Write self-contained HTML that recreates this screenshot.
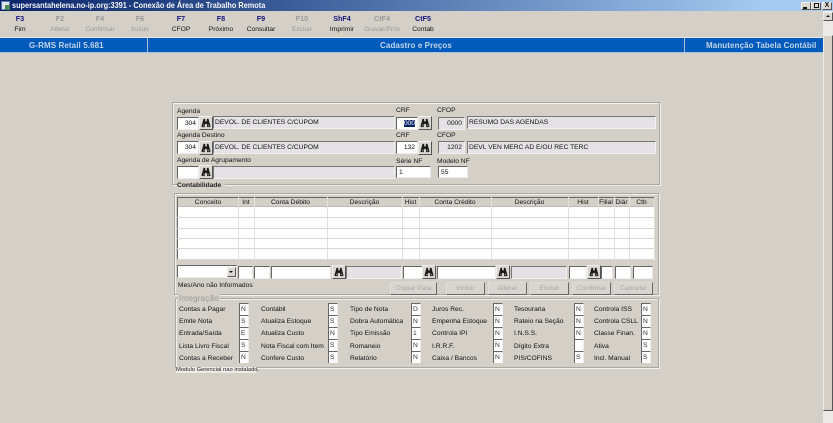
<!DOCTYPE html>
<html><head><meta charset="utf-8"><style>
html,body{margin:0;padding:0;background:#d4d0c8}
#r{position:relative;width:833px;height:423px;overflow:hidden;background:#d4d0c8;font:6.7px "Liberation Sans",sans-serif;color:#111;filter:blur(.35px)}
#r div,#r svg{position:absolute;box-sizing:border-box;white-space:nowrap}
.c{text-align:center}
.b{font-weight:bold;color:#14147a;font-size:7.2px}
.d{color:#999}
.k{color:#111}
.h{background:#005abc;height:16px;top:37px;color:#c4d4e8;font-weight:bold;font-size:8px;letter-spacing:.1px;line-height:15px;border-bottom:1px solid #a8c4e4;border-top:1px solid #e8e8e8}
.i{background:#fff;border-top:1px solid #666;border-left:1px solid #666;border-right:1px solid #e8e8e8;border-bottom:1px solid #eee;line-height:11px;padding:0 2px;height:13px}
.g{background:#e4e2e4;border-top:1px solid #777;border-left:1px solid #777;border-right:1px solid #f0f0f0;border-bottom:1px solid #f0f0f0;line-height:12px;padding:0 1px;height:13px}
.p{background:#dcd9d2;border:1px solid #eee;border-right-color:#555;border-bottom-color:#555;width:14px;height:14px}
.u{border:1px solid #ddd;border-right-color:#666;border-bottom-color:#666;color:#aaa;text-align:center;line-height:11px;height:13px;top:282px;background:#d8d5ce}
.f{background:#fff;border-top:1px solid #666;border-left:1px solid #666;border-right:1px solid #eee;width:10px;height:12px;line-height:12px;padding-left:1px;color:#333}
.l{color:#111;margin-top:1px}
.v{background:#e2e0dc;width:1px;top:197px;height:62px}
.w{background:#d8d6d2;height:1px;left:177px;width:477px}
.n{top:198px;line-height:9px;text-align:center;color:#111}
.gp{border:1px solid #a8a8a4;box-shadow:1px 1px 0 #f2f0ec, inset 1px 1px 0 #f2f0ec}
</style></head><body><div id="r">
<svg width="0" height="0" style="left:0;top:0"><defs><symbol id="z" viewBox="0 0 12 12"><path d="M3 1h2v3h2V1h2l1 4 1.500 5-1 1H7.300l-.3-4H5l-.3 4H1.500l-1-1L2 5z" fill="#1a1a1a"/><path d="M2.500 8h2v2h-2zM8 8h2v2H8z" fill="#777"/></symbol></defs></svg>

<!-- title bar -->
<div style="left:0;top:0;width:833px;height:11px;background:linear-gradient(90deg,#0a246a 0%,#2a4a88 25%,#6a8cc0 60%,#a6caf0 92%,#a6caf0 100%)"></div>
<div style="left:1px;top:1px;width:9px;height:9px;background:#dfe6f0;border:1px solid #5a7ab0"></div>
<div style="left:5px;top:5px;width:5px;height:5px;background:#4a8a5a"></div>
<div style="left:12px;top:0;height:11px;line-height:11px;color:#f4f6fa;font-size:8.2px;font-weight:bold;transform-origin:0 50%;transform:scaleX(.895)">supersantahelena.no-ip.org:3391 - Conexão de Área de Trabalho Remota</div>
<div class="p" style="left:801px;top:2px;width:10px;height:8px"></div><div style="left:803px;top:7px;width:4px;height:2px;background:#111"></div>
<div class="p" style="left:811px;top:2px;width:10px;height:8px"></div><div style="left:814px;top:3px;width:5px;height:5px;border:1px solid #111"></div>
<div class="p" style="left:822px;top:2px;width:10px;height:8px;font:bold 7px/6px 'Liberation Sans';color:#111;text-align:center">X</div>

<!-- toolbar -->
<div class="c b" style="left:0;width:40px;top:14px">F3</div><div class="c k" style="left:0;width:40px;top:26px">Fim</div>
<div class="c b d" style="left:40px;width:40px;top:14px;color:#999">F2</div><div class="c d" style="left:40px;width:40px;top:26px">Alterar</div>
<div class="c b" style="left:80px;width:40px;top:14px;color:#999">F4</div><div class="c d" style="left:80px;width:40px;top:26px">Confirmar</div>
<div class="c b" style="left:120px;width:40px;top:14px;color:#999">F6</div><div class="c d" style="left:120px;width:40px;top:26px">Incluir</div>
<div class="c b" style="left:161px;width:40px;top:14px">F7</div><div class="c k" style="left:161px;width:40px;top:26px">CFOP</div>
<div class="c b" style="left:201px;width:40px;top:14px">F8</div><div class="c k" style="left:201px;width:40px;top:26px">Próximo</div>
<div class="c b" style="left:241px;width:40px;top:14px">F9</div><div class="c k" style="left:241px;width:40px;top:26px">Consultar</div>
<div class="c b" style="left:282px;width:40px;top:14px;color:#999">F10</div><div class="c d" style="left:282px;width:40px;top:26px">Excluir</div>
<div class="c b" style="left:322px;width:40px;top:14px">ShF4</div><div class="c k" style="left:322px;width:40px;top:26px">Imprimir</div>
<div class="c b" style="left:362px;width:40px;top:14px;color:#999">CtF4</div><div class="c d" style="left:362px;width:40px;top:26px">Gravar/Próx</div>
<div class="c b" style="left:403px;width:40px;top:14px">CtF5</div><div class="c k" style="left:403px;width:40px;top:26px">Contab</div>

<!-- header bar -->
<div class="h" style="left:0;width:147px;padding-left:29px">G-RMS Retail 5.681</div>
<div class="h" style="left:147px;width:537px;text-align:center;border-left:1px solid #a8c4e4">Cadastro e Preços</div>
<div class="h" style="left:684px;width:139px;padding-left:21px;border-left:1px solid #a8c4e4">Manutenção Tabela Contábil</div>

<!-- scrollbar -->
<div style="left:823px;top:11px;width:10px;height:412px;background:#eceae6"></div>
<div class="p" style="left:823px;top:12px;width:10px;height:9px"></div>
<div style="left:826px;top:15px;width:0;height:0;border:2.500px solid transparent;border-bottom-color:#111;border-top:0"></div>
<div style="left:823px;top:35px;width:10px;height:376px;background:#d4d0c8;border:1px solid #eee;border-right-color:#555;border-bottom-color:#555"></div>

<!-- top group -->
<div class="gp" style="left:172px;top:102px;width:488px;height:83px"></div>
<div style="left:177px;top:108px">Agenda</div>
<div class="i" style="left:177px;top:117px;width:22px;text-align:right">304</div>
<div class="p" style="left:199px;top:116px"></div><svg width="10" height="10" style="left:201px;top:118px"><use href="#z"/></svg>
<div class="g" style="left:213px;top:116px;width:182px">DEVOL. DE CLIENTES C/CUPOM</div>
<div style="left:396px;top:107px">CRF</div>
<div class="i" style="left:396px;top:117px;width:22px;text-align:right"><span style="background:#0a246a;color:#fff">000</span></div>
<div class="p" style="left:418px;top:116px"></div><svg width="10" height="10" style="left:420px;top:118px"><use href="#z"/></svg>
<div style="left:437px;top:107px">CFOP</div>
<div class="g" style="left:438px;top:117px;width:27px;text-align:right;padding-right:2px">0000</div>
<div class="g" style="left:467px;top:116px;width:189px">RESUMO DAS AGENDAS</div>

<div style="left:177px;top:132px">Agenda Destino</div>
<div class="i" style="left:177px;top:141px;width:22px;text-align:right">304</div>
<div class="p" style="left:199px;top:141px"></div><svg width="10" height="10" style="left:201px;top:143px"><use href="#z"/></svg>
<div class="g" style="left:213px;top:141px;width:182px">DEVOL. DE CLIENTES C/CUPOM</div>
<div style="left:396px;top:132px">CRF</div>
<div class="i" style="left:396px;top:141px;width:22px;text-align:right">132</div>
<div class="p" style="left:418px;top:141px"></div><svg width="10" height="10" style="left:420px;top:143px"><use href="#z"/></svg>
<div style="left:437px;top:132px">CFOP</div>
<div class="g" style="left:438px;top:141px;width:27px;text-align:right;padding-right:2px">1202</div>
<div class="g" style="left:467px;top:141px;width:189px">DEVL VEN MERC AD E/OU REC TERC</div>

<div style="left:177px;top:157px">Agenda de Agrupamento</div>
<div class="i" style="left:177px;top:166px;width:22px"></div>
<div class="p" style="left:199px;top:165px"></div><svg width="10" height="10" style="left:201px;top:167px"><use href="#z"/></svg>
<div class="g" style="left:213px;top:166px;width:182px"></div>
<div style="left:396px;top:158px">Série NF</div>
<div class="i" style="left:396px;top:166px;width:35px;height:12px">1</div>
<div style="left:437px;top:158px">Modelo NF</div>
<div class="i" style="left:438px;top:166px;width:30px;height:12px">55</div>

<!-- Contabilidade -->
<div style="left:177px;top:182px;font-weight:bold;background:#d4d0c8;z-index:2;padding-right:4px;color:#222">Contabilidade</div>
<div class="gp" style="left:174px;top:193px;width:485px;height:102px"></div>

<!-- grid -->
<div style="left:177px;top:197px;width:478px;height:63px;background:#fff;border-top:1px solid #666;border-left:1px solid #666"></div>
<div style="left:178px;top:198px;width:476px;height:9px;background:#d4d0c8;border-bottom:1px solid #bbb"></div>
<div class="v" style="left:238px"></div><div class="v" style="left:254px"></div><div class="v" style="left:327px"></div><div class="v" style="left:402px"></div><div class="v" style="left:419px"></div><div class="v" style="left:491px"></div><div class="v" style="left:568px"></div><div class="v" style="left:598px"></div><div class="v" style="left:614px"></div><div class="v" style="left:629px"></div><div class="v" style="left:654px"></div>
<div class="w" style="top:217px"></div><div class="w" style="top:228px"></div><div class="w" style="top:238px"></div><div class="w" style="top:248px"></div><div class="w" style="top:259px"></div>
<div class="n" style="left:178px;width:60px">Conceito</div>
<div class="n" style="left:238px;width:16px">Int</div>
<div class="n" style="left:254px;width:73px">Conta Débito</div>
<div class="n" style="left:327px;width:75px">Descrição</div>
<div class="n" style="left:402px;width:17px">Hist</div>
<div class="n" style="left:419px;width:72px">Conta Crédito</div>
<div class="n" style="left:491px;width:77px">Descrição</div>
<div class="n" style="left:568px;width:30px">Hist</div>
<div class="n" style="left:598px;width:16px">Filial</div>
<div class="n" style="left:614px;width:15px">Diár</div>
<div class="n" style="left:629px;width:25px">Ctb</div>

<!-- input row -->
<div class="i" style="left:177px;top:265px;width:60px"></div>
<div class="p" style="left:227px;top:267px;width:9px;height:10px"></div><div style="left:229px;top:271px;width:0;height:0;border:2.500px solid transparent;border-top-color:#111;border-bottom:0"></div>
<div class="i" style="left:238px;top:266px;width:15px"></div>
<div class="i" style="left:254px;top:266px;width:16px"></div>
<div class="i" style="left:271px;top:266px;width:60px"></div>
<div class="p" style="left:332px;top:265px"></div><svg width="10" height="10" style="left:334px;top:267px"><use href="#z"/></svg>
<div class="g" style="left:346px;top:266px;width:56px"></div>
<div class="i" style="left:403px;top:266px;width:20px"></div>
<div class="p" style="left:422px;top:265px"></div><svg width="10" height="10" style="left:424px;top:267px"><use href="#z"/></svg>
<div class="i" style="left:437px;top:266px;width:59px"></div>
<div class="p" style="left:496px;top:265px"></div><svg width="10" height="10" style="left:498px;top:267px"><use href="#z"/></svg>
<div class="g" style="left:511px;top:266px;width:56px"></div>
<div class="i" style="left:569px;top:266px;width:18px"></div>
<div class="p" style="left:587px;top:265px"></div><svg width="10" height="10" style="left:589px;top:267px"><use href="#z"/></svg>
<div class="i" style="left:601px;top:266px;width:12px"></div>
<div class="i" style="left:615px;top:266px;width:16px"></div>
<div class="i" style="left:633px;top:266px;width:20px"></div>

<div style="left:178px;top:282px">Mes/Ano não Informados</div>
<div class="u" style="left:390px;width:47px">Copiar Para</div>
<div class="u" style="left:446px;width:39px">Incluir</div>
<div class="u" style="left:488px;width:39px">Alterar</div>
<div class="u" style="left:530px;width:39px">Excluir</div>
<div class="u" style="left:572px;width:39px">Confirmar</div>
<div class="u" style="left:614px;width:39px">Cancelar</div>

<!-- Integracao -->
<div class="gp" style="left:175px;top:298px;width:484px;height:70px"></div>
<div style="left:178px;top:294px;background:#d4d0c8;padding:0 1px;color:#999;font-size:8px;letter-spacing:.2px">Integração</div>

<div class="l" style="left:179px;top:305px">Contas a Pagar</div><div class="f" style="left:239px;top:303px">N</div>
<div class="l" style="left:179px;top:317px">Emite Nota</div><div class="f" style="left:239px;top:315px">S</div>
<div class="l" style="left:179px;top:329px">Entrada/Saída</div><div class="f" style="left:239px;top:327px">E</div>
<div class="l" style="left:179px;top:342px">Lista Livro Fiscal</div><div class="f" style="left:239px;top:339px">S</div>
<div class="l" style="left:179px;top:354px">Contas a Receber</div><div class="f" style="left:239px;top:351px">N</div>

<div class="l" style="left:261px;top:305px">Contábil</div><div class="f" style="left:328px;top:303px">S</div>
<div class="l" style="left:261px;top:317px">Atualiza Estoque</div><div class="f" style="left:328px;top:315px">S</div>
<div class="l" style="left:261px;top:329px">Atualiza Custo</div><div class="f" style="left:328px;top:327px">N</div>
<div class="l" style="left:261px;top:342px">Nota Fiscal com Item</div><div class="f" style="left:328px;top:339px">S</div>
<div class="l" style="left:261px;top:354px">Confere Custo</div><div class="f" style="left:328px;top:351px">S</div>

<div class="l" style="left:350px;top:305px">Tipo de Nota</div><div class="f" style="left:411px;top:303px">D</div>
<div class="l" style="left:350px;top:317px">Dobra Automática</div><div class="f" style="left:411px;top:315px">N</div>
<div class="l" style="left:350px;top:329px">Tipo Emissão</div><div class="f" style="left:411px;top:327px">1</div>
<div class="l" style="left:350px;top:342px">Romaneio</div><div class="f" style="left:411px;top:339px">N</div>
<div class="l" style="left:350px;top:354px">Relatório</div><div class="f" style="left:411px;top:351px">N</div>

<div class="l" style="left:432px;top:305px">Juros Rec.</div><div class="f" style="left:493px;top:303px">N</div>
<div class="l" style="left:432px;top:317px">Empenha Estoque</div><div class="f" style="left:493px;top:315px">N</div>
<div class="l" style="left:432px;top:329px">Controla IPI</div><div class="f" style="left:493px;top:327px">N</div>
<div class="l" style="left:432px;top:342px">I.R.R.F.</div><div class="f" style="left:493px;top:339px">N</div>
<div class="l" style="left:432px;top:354px">Caixa / Bancos</div><div class="f" style="left:493px;top:351px">N</div>

<div class="l" style="left:514px;top:305px">Tesouraria</div><div class="f" style="left:574px;top:303px">N</div>
<div class="l" style="left:514px;top:317px">Rateio na Seção</div><div class="f" style="left:574px;top:315px">N</div>
<div class="l" style="left:514px;top:329px">I.N.S.S.</div><div class="f" style="left:574px;top:327px">N</div>
<div class="l" style="left:514px;top:342px">Dígito Extra</div><div class="f" style="left:574px;top:339px"></div>
<div class="l" style="left:514px;top:354px">PIS/COFINS</div><div class="f" style="left:574px;top:351px">S</div>

<div class="l" style="left:594px;top:305px">Controla ISS</div><div class="f" style="left:641px;top:303px">N</div>
<div class="l" style="left:594px;top:317px">Controla CSLL</div><div class="f" style="left:641px;top:315px">N</div>
<div class="l" style="left:594px;top:329px">Classe Finan.</div><div class="f" style="left:641px;top:327px">N</div>
<div class="l" style="left:594px;top:342px">Ativa</div><div class="f" style="left:641px;top:339px">S</div>
<div class="l" style="left:594px;top:354px">Incl. Manual</div><div class="f" style="left:641px;top:351px">S</div>

<div style="left:176px;top:367px;width:80px;height:6px;background:#eeece8;font-size:5.800px;line-height:6px;color:#222">Modulo Gerencial nao instalado.</div>
</div></body></html>
